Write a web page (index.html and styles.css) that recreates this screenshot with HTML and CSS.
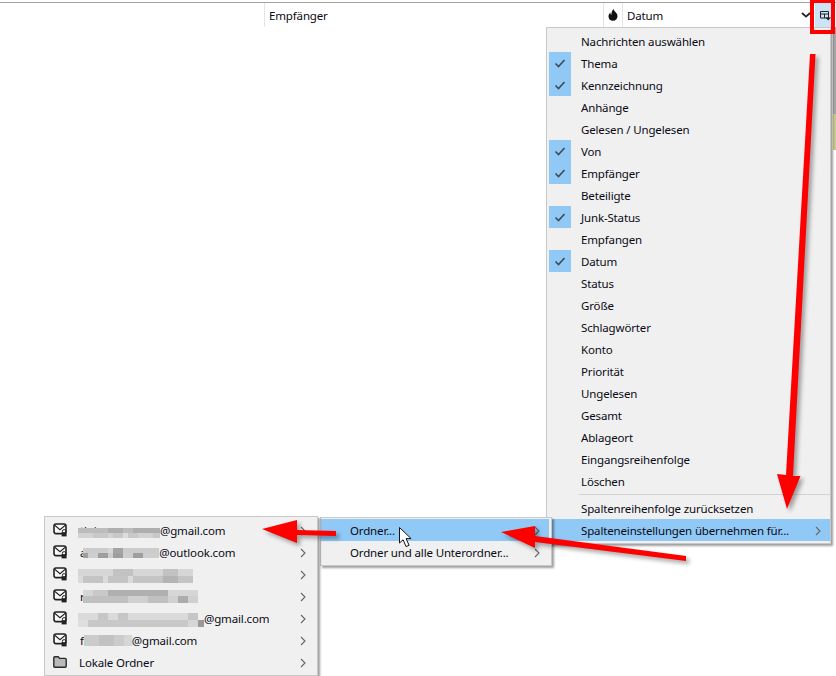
FILE: index.html
```html
<!DOCTYPE html>
<html lang="de">
<head>
<meta charset="utf-8">
<title>Spalten</title>
<link rel="stylesheet" href="styles.css">
</head>
<body>
<svg class="defs" width="0" height="0" aria-hidden="true">
  <symbol id="i-check" viewBox="0 0 22 22"><path d="M6.5 11.5l3 3 6-6.5" fill="none" stroke="#3f4a55" stroke-width="1.6"/></symbol>
  <symbol id="i-chev" viewBox="0 0 6 10"><path d="M1 1l4 4-4 4" fill="none" stroke="#666" stroke-width="1.1"/></symbol>
  <symbol id="i-mail" viewBox="0 0 15 14">
    <rect x="1" y="1" width="12" height="9.6" rx="2" fill="#fafafa" stroke="#222" stroke-width="1.6"/>
    <path d="M2 2.5l5 4.200 5-4.200" fill="none" stroke="#222" stroke-width="1.1"/>
    <path d="M9.400 9.500V8.300a1.700 1.700 0 0 1 3.400 0v1.200" fill="none" stroke="#222" stroke-width="1"/>
    <rect x="8.600" y="9.200" width="5" height="4.200" fill="#222"/>
  </symbol>
  <symbol id="i-folder" viewBox="0 0 14 12">
    <path d="M.8 10.200V1.800q0-1 1-1h3.400l1.400 1.600h5.600q1 0 1 1v6.800q0 1-1 1H1.800q-1 0-1-1z" fill="#b9b9b9" stroke="#2a2a2a" stroke-width="1.4"/>
  </symbol>
</svg>

<main class="page">
  <header class="thead">
    <div class="col col-blank"></div>
    <div class="col col-to">Empfänger</div>
    <div class="col col-junk">
      <svg class="flame" width="10" height="12" viewBox="0 0 10 12"><path d="M5.600 0c.3 1.600 1.200 2.300 2.300 3.500C9 4.700 9.500 5.900 9.500 7.200 9.500 9.900 7.500 11.800 5 11.800S.5 10 .5 7.400C.5 5.900 1.200 4.500 2.400 3.400c0 1.200.3 2 1 2.600C3.300 3.800 4 1.600 5.600 0z" fill="#111"/></svg>
    </div>
    <div class="col col-date">
      <span>Datum</span>
      <svg width="10" height="6" viewBox="0 0 10 6"><path d="M1 1l4 3.600L9 1" fill="none" stroke="#222" stroke-width="1.800"/></svg>
    </div>
    <div class="col col-picker">
      <svg width="11" height="11" viewBox="0 0 11 11"><path d="M.5 1.500h8v6.500h-8zM.5 4h8M4.500 4v4" fill="none" stroke="#222"/><path d="M5.500 7.500h5.500L8.200 10.500z" fill="#222"/></svg>
    </div>
  </header>

  <div class="edge"><div class="edge-olive"></div></div>

  <nav class="menu menu-columns">
    <div class="item"><span class="gut"></span>Nachrichten auswählen</div>
    <div class="item"><span class="gut on"><svg width="22" height="22"><use href="#i-check"/></svg></span>Thema</div>
    <div class="item"><span class="gut on"><svg width="22" height="22"><use href="#i-check"/></svg></span>Kennzeichnung</div>
    <div class="item"><span class="gut"></span>Anhänge</div>
    <div class="item"><span class="gut"></span>Gelesen / Ungelesen</div>
    <div class="item"><span class="gut on"><svg width="22" height="22"><use href="#i-check"/></svg></span>Von</div>
    <div class="item"><span class="gut on"><svg width="22" height="22"><use href="#i-check"/></svg></span>Empfänger</div>
    <div class="item"><span class="gut"></span>Beteiligte</div>
    <div class="item"><span class="gut on"><svg width="22" height="22"><use href="#i-check"/></svg></span>Junk-Status</div>
    <div class="item"><span class="gut"></span>Empfangen</div>
    <div class="item"><span class="gut on"><svg width="22" height="22"><use href="#i-check"/></svg></span>Datum</div>
    <div class="item"><span class="gut"></span>Status</div>
    <div class="item"><span class="gut"></span>Größe</div>
    <div class="item"><span class="gut"></span>Schlagwörter</div>
    <div class="item"><span class="gut"></span>Konto</div>
    <div class="item"><span class="gut"></span>Priorität</div>
    <div class="item"><span class="gut"></span>Ungelesen</div>
    <div class="item"><span class="gut"></span>Gesamt</div>
    <div class="item"><span class="gut"></span>Ablageort</div>
    <div class="item"><span class="gut"></span>Eingangsreihenfolge</div>
    <div class="item"><span class="gut"></span>Löschen</div>
    <div class="sep"></div>
    <div class="item"><span class="gut"></span>Spaltenreihenfolge zurücksetzen</div>
    <div class="item active"><span class="gut"></span><span class="grow">Spalteneinstellungen übernehmen für...</span><svg class="chev" width="6" height="10"><use href="#i-chev"/></svg></div>
  </nav>

  <nav class="menu menu-folder">
    <div class="item active"><span class="grow">Ordner...</span><svg class="chev" width="6" height="10"><use href="#i-chev"/></svg></div>
    <div class="item"><span class="grow">Ordner und alle Unterordner...</span><svg class="chev" width="6" height="10"><use href="#i-chev"/></svg></div>
  </nav>

  <nav class="menu menu-accounts">
    <div class="item">
      <svg class="acc-icon" width="15" height="14"><use href="#i-mail"/></svg>
      <span class="grow label"><span class="frag">th i</span>
        <svg class="mosaic m-back m-low" width="82" height="10" shape-rendering="crispEdges">
          <path stroke="#bcbcbc" stroke-width="5" d="M0 2.500h30M45 2.500h35"/>
          <path stroke="#aeaeae" stroke-width="5" d="M30 2.500h15M55 2.500h27"/>
          <path stroke="#d2d2d2" stroke-width="5" d="M0 7.500h15M30 7.500h5M60 7.500h15"/>
          <path stroke="#c8c8c8" stroke-width="5" d="M15 7.500h15M35 7.500h10M50 7.500h10M75 7.500h7"/>
          <path stroke="#dcdcdc" stroke-width="5" d="M45 7.500h5"/>
        </svg>@gmail.com</span>
      <svg class="chev" width="6" height="10"><use href="#i-chev"/></svg>
    </div>
    <div class="item">
      <svg class="acc-icon" width="15" height="14"><use href="#i-mail"/></svg>
      <span class="grow label">a
        <svg class="mosaic m-a" width="76" height="10" shape-rendering="crispEdges">
          <path stroke="#cccccc" stroke-width="5" d="M0 2.500h25M40 2.500h36"/>
          <path stroke="#a4a4a4" stroke-width="5" d="M30 2.500h10"/>
          <path stroke="#d6d6d6" stroke-width="5" d="M25 2.500h5"/>
          <path stroke="#9e9e9e" stroke-width="5" d="M0 7.500h5M15 7.500h10M30 7.500h10M50 7.500h10"/>
          <path stroke="#cecece" stroke-width="5" d="M5 7.500h10M25 7.500h5M40 7.500h10M60 7.500h16"/>
        </svg>@outlook.com</span>
      <svg class="chev" width="6" height="10"><use href="#i-chev"/></svg>
    </div>
    <div class="item">
      <svg class="acc-icon" width="15" height="14"><use href="#i-mail"/></svg>
      <span class="grow label">
        <svg class="mosaic m-back" width="115" height="14" shape-rendering="crispEdges">
          <path stroke="#d6d6d6" stroke-width="7" d="M0 3.500h35M55 3.500h30M100 3.500h15"/>
          <path stroke="#c2c2c2" stroke-width="7" d="M35 3.500h20M85 3.500h15"/>
          <path stroke="#dadada" stroke-width="7" d="M0 10.500h5M25 10.500h5M50 10.500h5"/>
          <path stroke="#c4c4c4" stroke-width="7" d="M5 10.500h20M30 10.500h20M55 10.500h30M100 10.500h15"/>
          <path stroke="#b4b4b4" stroke-width="7" d="M85 10.500h15"/>
        </svg></span>
      <svg class="chev" width="6" height="10"><use href="#i-chev"/></svg>
    </div>
    <div class="item">
      <svg class="acc-icon" width="15" height="14"><use href="#i-mail"/></svg>
      <span class="grow label">r
        <svg class="mosaic m-r" width="115" height="13" shape-rendering="crispEdges">
          <path stroke="#d6d6d6" stroke-width="6" d="M0 3h10M85 3h30"/>
          <path stroke="#c8c8c8" stroke-width="6" d="M10 3h15"/>
          <path stroke="#b0b0b0" stroke-width="6" d="M25 3h60"/>
          <path stroke="#c0c0c0" stroke-width="7" d="M0 9.500h45M65 9.500h20"/>
          <path stroke="#d0d0d0" stroke-width="7" d="M45 9.500h20M85 9.500h10M105 9.500h10"/>
          <path stroke="#acacac" stroke-width="7" d="M95 9.500h10"/>
        </svg></span>
      <svg class="chev" width="6" height="10"><use href="#i-chev"/></svg>
    </div>
    <div class="item">
      <svg class="acc-icon" width="15" height="14"><use href="#i-mail"/></svg>
      <span class="grow label">
        <svg class="mosaic m-back" width="126" height="14" shape-rendering="crispEdges">
          <path stroke="#dadada" stroke-width="7" d="M0 3.500h20M30 3.500h10M50 3.500h70"/>
          <path stroke="#c6c6c6" stroke-width="7" d="M20 3.500h10M40 3.500h10M110 3.500h10"/>
          <path stroke="#dedede" stroke-width="7" d="M0 10.500h10"/>
          <path stroke="#c8c8c8" stroke-width="7" d="M10 10.500h100"/>
          <path stroke="#d6d6d6" stroke-width="7" d="M110 10.500h10"/>
          <path stroke="#999" stroke-width="7" d="M120 10.500h6"/>
        </svg>@gmail.com</span>
      <svg class="chev" width="6" height="10"><use href="#i-chev"/></svg>
    </div>
    <div class="item">
      <svg class="acc-icon" width="15" height="14"><use href="#i-mail"/></svg>
      <span class="grow label">f
        <svg class="mosaic" width="48" height="11" shape-rendering="crispEdges">
          <path stroke="#cbcbcb" stroke-width="11" d="M0 5.500h48"/>
          <path stroke="#c2c2c2" stroke-width="11" d="M15 5.500h15"/>
          <path stroke="#d6d6d6" stroke-width="11" d="M40 5.500h8"/>
        </svg>@gmail.com</span>
      <svg class="chev" width="6" height="10"><use href="#i-chev"/></svg>
    </div>
    <div class="item">
      <svg class="acc-icon" width="14" height="12"><use href="#i-folder"/></svg>
      <span class="grow label">Lokale Ordner</span>
      <svg class="chev" width="6" height="10"><use href="#i-chev"/></svg>
    </div>
  </nav>

  <svg class="overlay" width="836" height="676" viewBox="0 0 836 676">
    <g class="arrows" fill="#fe0000">
      <path d="M810 54h5.500L793 476h7.500L787 509 777 474l9 1z"/>
      <path d="M501 532l34-6v10l151 20v5L535 542v6z"/>
      <path d="M262 529l35-9v10l39 1v5l-39-1v8z"/>
    </g>
    <rect class="redbox" x="812" y="1" width="21" height="31" fill="none" stroke="#f00" stroke-width="4"/>
    <path d="M399.500 527.500v15.500l3.600-3.200 3 6.800 3-1.300-3-6.700h5z" fill="#fff" stroke="#111"/>
  </svg>
</main>
</body>
</html>
```

FILE: styles.css
```css
* { box-sizing: border-box; }
html, body { margin: 0; padding: 0; background: #fff; }
.defs { position: absolute; }

.page {
  position: relative;
  width: 836px;
  height: 676px;
  overflow: hidden;
  background: #fff;
  font-family: "Noto Sans", "Open Sans", sans-serif;
  font-size: 11.5px;
  letter-spacing: -.15px;
  color: #0a0a14;
}

/* table header */
.thead {
  display: flex;
  height: 25px;
  margin-top: 2px;
  border-top: 1px solid #a3a3a3;
}
.col {
  display: flex;
  align-items: center;
  height: 24px;
  border-left: 1px solid #e5e5e5;
}
.col-blank { width: 264px; border-left: 0; }
.col-to { width: 339px; padding-left: 4px; }
.col-junk { width: 19px; justify-content: center; }
.col-date {
  width: 193px;
  padding: 0 4px;
  justify-content: space-between;
}
.col-picker {
  flex: 1;
  border-left: 0;
  margin-right: 2px;
  padding-left: 5px;
  background: #cce4f7;
}

/* scrollbar sliver peeking out at the right edge */
.edge {
  position: absolute;
  right: 0;
  top: 27px;
  width: 3px;
  height: 123px;
  background: #a6a6a6;
}
.edge-olive {
  margin-top: 87px;
  height: 36px;
  background: #c9c98a;
}

/* popup menus */
.menu {
  position: absolute;
  display: flex;
  flex-direction: column;
  background: #f0f0f0;
  border: 1px solid #c8c8c8;
  box-shadow: 2px 2px 2px rgba(0, 0, 0, .38);
}
.menu-columns { left: 546px; top: 27px; width: 285px; height: 517px; padding: 2px 0 2px 2px; }
.menu-folder { left: 320px; top: 517px; width: 232px; height: 49px; padding: 1px 2px 2px 0; }
.menu-accounts { left: 44px; top: 516px; width: 274px; height: 160px; padding: 2px 0 0 0; }

.item {
  display: flex;
  align-items: center;
  flex: none;
  height: 22px;
  padding-top: 1px;
  white-space: nowrap;
}
.gut { width: 22px; height: 22px; margin: -1px 10px 0 0; flex: none; }
.gut.on { background: #90c8f6; }
.gut svg { display: block; }
.grow { flex: 1; min-width: 0; }
.active { background: #90c8f6; }
.chev { flex: none; margin-right: 9px; display: block; }
.sep { height: 5px; flex: none; margin-left: 30px; padding-top: 2px; }
.sep::before { content: ""; display: block; height: 1px; background: #d2d2d2; }

.menu-folder .item { padding-left: 29px; }
.menu-accounts .item { padding-left: 8px; }
.menu-accounts .chev { margin-right: 11px; }
.acc-icon { flex: none; margin: -2px 12px 0 0; display: block; }

.label { display: flex; align-items: center; position: relative; }
.frag { position: absolute; left: 0; top: 0; }
.mosaic { display: block; flex: none; position: relative; }
.m-back { margin: 2px 0 0 -2px; }
.m-low { margin-top: 5px; }
.m-a { margin-left: -3px; }
.m-r { margin-left: -2px; }

.overlay { position: absolute; left: 0; top: 0; pointer-events: none; }
.arrows { filter: drop-shadow(3px 3px 2px rgba(0, 0, 0, .35)); }
```
